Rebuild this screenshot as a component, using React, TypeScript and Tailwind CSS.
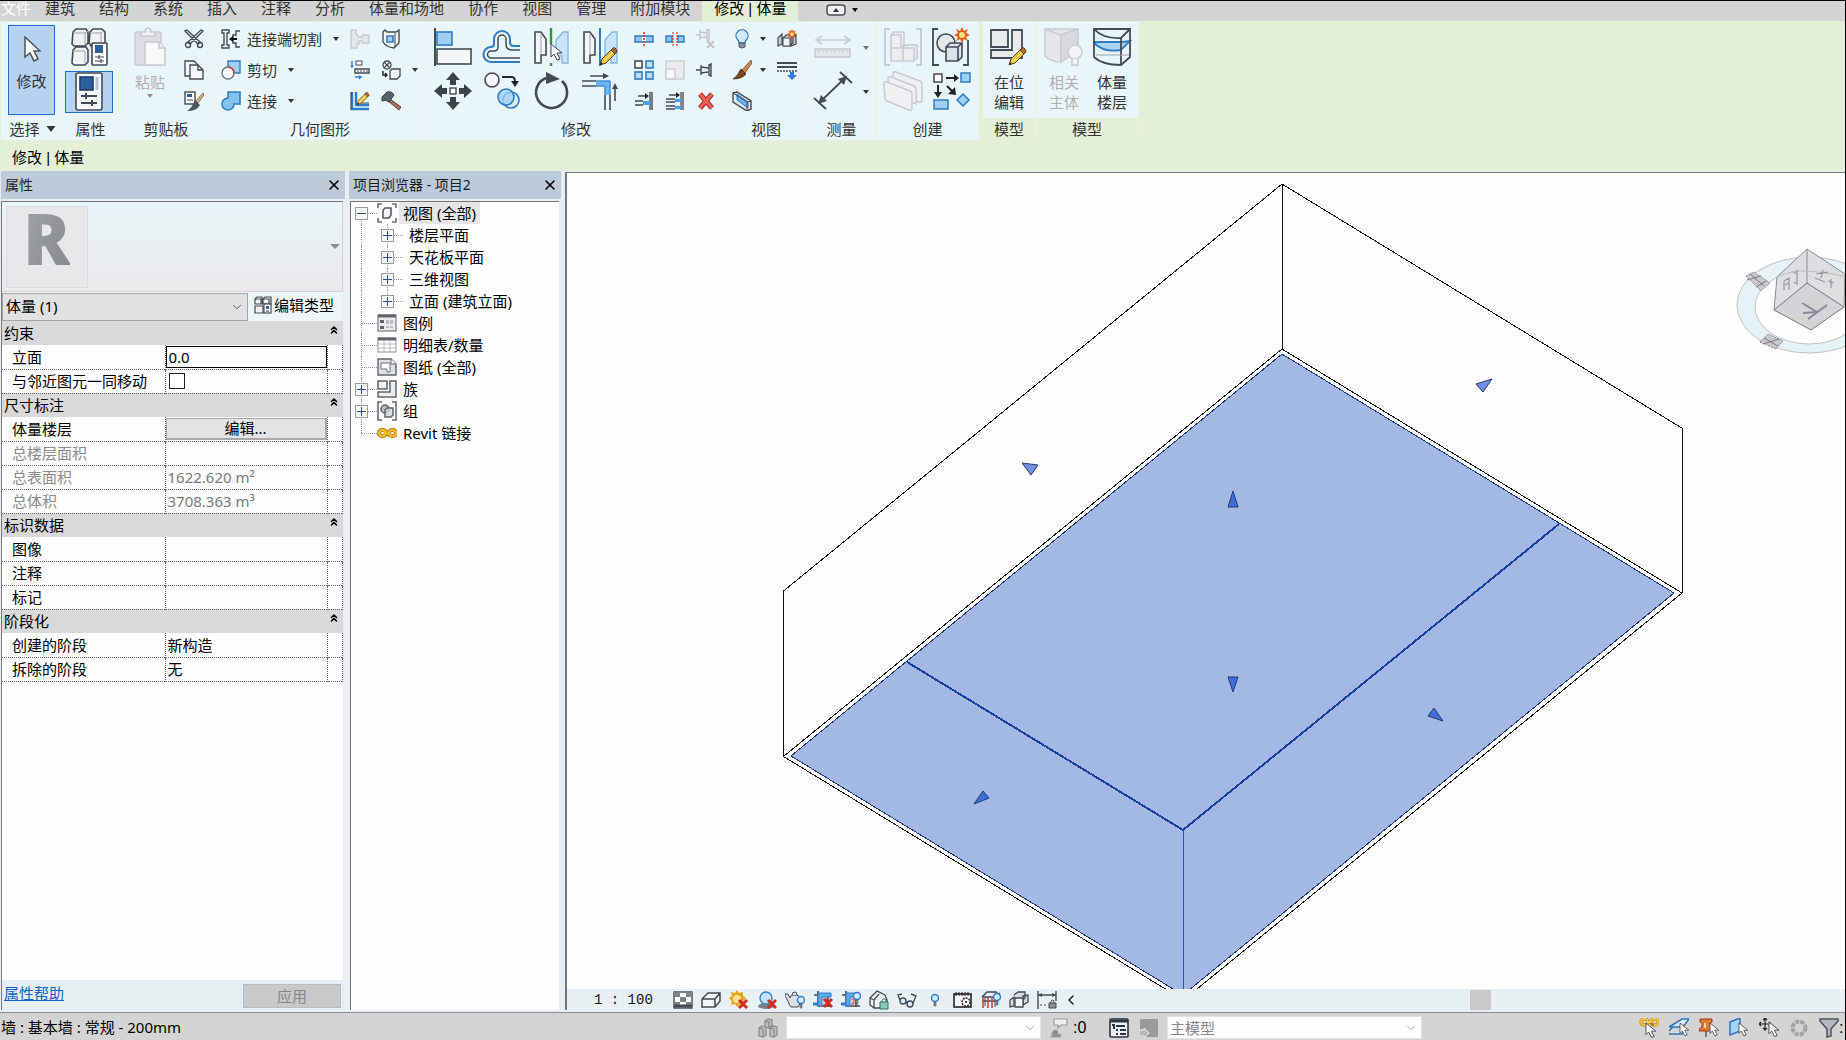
import { useState } from 'react';
import type { ReactNode } from 'react';
import clsx from 'clsx';
import { ChevronDown, ChevronLeft, ChevronsUp, X } from 'lucide-react';

const DARK = '#434a54';
const BLUE = '#2f7cc4';
const SKY = '#9fd0f3';
const PALE = '#c9ccd1';

// ---------- shared icon parts ----------

const Pointer = () => (
  <path d="M0 0v13l3-3 3 6 3-1-3-6h5z" fill="#fff" stroke="#3a404a" strokeWidth="1" />
);

const Pencil = () => (
  <>
    <path d="M0 18l2-6L13 1l4 4L6 16z" fill="#f5c43c" stroke="#5b4526" strokeWidth="1" />
    <path d="M11 3l2-2q2-1 3 1t1 3l-2 2z" fill="#b8652f" stroke="#5b4526" strokeWidth="1" />
    <path d="M4 14L13 5" stroke="#fff0b0" strokeWidth="1" />
    <path d="M0 18l1-3 2 2z" fill="#222" />
  </>
);

const Star = ({ x, y, r }: { x: number; y: number; r: number }) => (
  <g transform={`translate(${x} ${y}) scale(${r / 8})`}>
    <path d="M0-8l2 4 4-2-2 4 4 2-4 2 2 4-4-2-2 4-2-4-4 2 2-4-4-2 4-2-2-4 4 2z" fill="#e8591c" />
    <circle r="3" fill="#ffe27a" />
  </g>
);

const RedCross = ({ x, y }: { x: number; y: number }) => (
  <path transform={`translate(${x} ${y})`} d="M0 0l8 8M8 0L0 8" stroke="#cf2b1f" strokeWidth="3" />
);

const MiniBulb = ({ x, y }: { x: number; y: number }) => (
  <g transform={`translate(${x} ${y})`}>
    <circle cx="4" cy="4" r="3.5" fill="#d6ecff" stroke="#2f7fd0" strokeWidth="1.5" />
    <path d="M3 8h2v4H3z" fill="#8b8f94" stroke="#555" strokeWidth=".6" />
  </g>
);

const MirrorHalves = () => (
  <>
    <path d="M4 5h6l5 7v16h-5v8H4z" fill="#f4f5f6" stroke={DARK} strokeWidth="1.6" />
    <path d="M10 6v22" stroke="#9ba1a8" />
    <path d="M37 5h-5l-7 8v16h6v7h6z" fill="#c8e4f8" stroke="#85bbe0" strokeWidth="1.4" />
  </>
);

// large icons are drawn on a 40 grid, small ones on a 20 grid
const large: Record<string, ReactNode> = {
  typeProps: (
    <g strokeWidth="1.6" stroke={DARK} fill="#f1f2f3">
      <path d="M4 5l3-3h10l2 3v11l-3 3H5l-2-2zM21 5l3-3h9l3 3v11l-3 3H22l-2-3zM4 23l3-3h10l2 3v12l-3 3H5l-2-2z" />
      <path d="M4 6h12v12M16 6l3-2M21 6h11v10M32 6l3-2M4 24h12v12" fill="none" stroke="#9aa0a7" strokeWidth="1" />
      <rect x="23" y="16" width="15" height="22" rx="1" fill="#fff" />
      <rect x="26" y="18" width="8" height="8" fill="#2c5f9c" stroke="none" />
      <path d="M26 30h9M30 28v4M26 34h9M32 32v4" strokeWidth="1.2" />
    </g>
  ),
  props: (
    <g stroke={DARK} strokeWidth="1.6" fill="none">
      <rect x="7" y="1" width="26" height="37" rx="2" fill="#f6f7f8" />
      <rect x="11" y="5" width="13" height="13" fill="#2c5f9c" stroke="#1d3f6b" />
      <path d="M28 5v13" stroke="#b9c3cf" strokeWidth="3" />
      <path d="M12 24h16M17 21v6M12 31h16M23 28v6" strokeWidth="2" />
    </g>
  ),
  paste: (
    <g fill="#eef0f1" stroke={PALE} strokeWidth="1.6">
      <rect x="5" y="5" width="26" height="33" rx="2" fill="#dcdee1" />
      <path d="M11 9V5h4q0-4 3-4t3 4h4v4z" />
      <path d="M15 15h14l6 6v17H15z" fill="#f8f8f8" />
      <path d="M29 15v6h6" />
    </g>
  ),
  align: (
    <g strokeWidth="1.6">
      <path d="M2 1v38" stroke={DARK} strokeWidth="2" />
      <rect x="4" y="5" width="15" height="13" fill={SKY} stroke={BLUE} />
      <rect x="4" y="22" width="34" height="15" fill="#f4f6f7" stroke={DARK} />
    </g>
  ),
  offset: (
    <g fill="none" strokeWidth="2">
      <path d="M38 19h-6q-4 0-4-4v-3a8 8 0 0 0-16 0v5q0 3-3 3a7 7 0 0 0 0 15h29" stroke={BLUE} />
      <path d="M38 23h-8q-6 0-6-6v-5a4 4 0 0 0-8 0v8q0 4-4 4H9a3 3 0 0 0 0 7h29" stroke={DARK} strokeWidth="1.5" />
    </g>
  ),
  mirrorPick: (
    <>
      <MirrorHalves />
      <path d="M20 1v16M20 36v3" stroke="#2d9a35" strokeWidth="2.4" />
      <g transform="translate(20 17)"><Pointer /></g>
    </>
  ),
  mirrorDraw: (
    <>
      <MirrorHalves />
      <path d="M20 1v38" stroke={BLUE} strokeWidth="2" />
      <g transform="translate(20 20)"><Pencil /></g>
    </>
  ),
  move: (
    <g fill="#3b424c">
      <path d="M20 1l7 8h-4v5h-6V9h-4zM20 39l7-8h-4v-5h-6v5h-4zM1 20l8-7v4h5v6H9v4zM39 20l-8-7v4h-5v6h5v4z" />
      <rect x="17" y="17" width="6" height="6" fill="#fff" stroke={DARK} strokeWidth="1.4" />
    </g>
  ),
  copy: (
    <g strokeWidth="1.6">
      <circle cx="10" cy="9" r="7" fill="#f4f5f6" stroke={DARK} />
      <path d="M20 6h10q3 0 3 5" fill="none" stroke="#22262c" strokeWidth="2" />
      <path d="M29 10h8l-4 6z" fill="#22262c" />
      <circle cx="29" cy="29" r="8" fill="#d9eefb" stroke={BLUE} />
      <circle cx="24" cy="26" r="8" fill={SKY} fillOpacity=".8" stroke={BLUE} />
    </g>
  ),
  rotate: (
    <>
      <path d="M31 10a15.5 15.5 0 1 1-16-3" fill="none" stroke={DARK} strokeWidth="2.6" />
      <path d="M15 1l14 7-14 5z" fill={DARK} />
    </>
  ),
  trim: (
    <g fill="none" stroke={DARK} strokeWidth="1.6">
      <path d="M2 10h14M2 15h14M25 24v15M30 24v15" />
      <path d="M16 12.5h11.5V24" stroke="#6db5ef" strokeWidth="6" />
      <path d="M16 10h14v14M16 15h9v9" stroke={BLUE} strokeWidth="1" />
      <path d="M10 5h15M35 30V16" />
      <path d="M23 2l6 3-6 3zM32 18l3-6 3 6z" fill={DARK} stroke="none" />
    </g>
  ),
  ruler: (
    <g stroke={PALE} strokeWidth="1.6" fill="none">
      <path d="M3 13h34M9 9l-6 4 6 4M31 9l6 4-6 4" />
      <rect x="2" y="22" width="35" height="8" fill="#e3e5e7" />
      <path d="M6 22v4M10 22v3M14 22v4M18 22v3M22 22v4M26 22v3M30 22v4M34 22v3" strokeWidth="1" />
    </g>
  ),
  dimension: (
    <g stroke={DARK} strokeWidth="1.8" fill="none">
      <path d="M7 31L32 7M1 27l12 11M27 1l12 11" />
      <path d="M5 33l3-9 6 6zM34 5l-9 3 6 6z" fill={DARK} stroke="none" />
    </g>
  ),
  assembly: (
    <g stroke={PALE} strokeWidth="1.6" fill="#eceeef">
      <path d="M7 2H2v36h5M33 2h5v36h-5" fill="none" strokeWidth="2" />
      <path d="M8 8l3-3h10v13l-3 3H8zM8 21h12v13H8zM20 21l3-3h11v13l-3 3H20z" />
      <path d="M8 8h10v13M20 21h11v13" fill="none" />
    </g>
  ),
  group: (
    <>
      <path d="M7 2H2v36h6M32 38h5V13" fill="none" stroke={DARK} strokeWidth="1.8" />
      <circle cx="15" cy="16" r="9" fill="#e4e8ea" stroke={DARK} strokeWidth="1.6" />
      <path d="M15 20l4-4h12v14l-4 4H15zM15 20h12v14M27 20l4-4" fill="#d7e2ec" stroke={DARK} strokeWidth="1.6" />
      <Star x={31} y={8} r={8} />
    </>
  ),
  parts: (
    <g stroke={PALE} strokeWidth="1.6" fill="#eff0f1">
      <path d="M10 6V3q0-3 3-2l24 9q2 1 2 3v16q0 3-3 2L10 22z" />
      <path d="M5 10V7q0-2 3-1l23 9q2 1 2 3v15L5 24z" />
      <path d="M1 13q0-3 3-2l23 9q2 1 2 3v14q0 3-3 2L4 30q-2-1-2-3z" />
    </g>
  ),
  similar: (
    <g strokeWidth="1.5">
      <rect x="3" y="3" width="8" height="8" fill="#fff" stroke={DARK} />
      <rect x="30" y="2" width="9" height="9" fill={SKY} stroke={BLUE} />
      <rect x="3" y="29" width="14" height="9" fill={SKY} stroke={BLUE} />
      <path d="M32 23l6 6-6 6-6-6z" fill={SKY} stroke={BLUE} />
      <path d="M15 7h9M7 14v8M16 15l6 6" stroke="#222" fill="none" strokeWidth="2" />
      <path d="M23 3l5 4-5 4zM3 21h8l-4 6zM24 16l1 8-8-1z" fill="#222" />
    </g>
  ),
  editInPlace: (
    <>
      <path d="M2 3h17v17H2zM23 3h10v28H2v-8h21z" fill="#e8ebee" stroke={DARK} strokeWidth="1.8" />
      <g transform="translate(20 20)"><Pencil /></g>
    </>
  ),
  host: (
    <g stroke={PALE} strokeWidth="1.6" fill="#e4e6e8">
      <path d="M1 2h33l-17 6zM1 2v27q6 6 16 6V8z" />
      <path d="M34 2v22l-17 11V8z" fill="#d8dadd" />
      <circle cx="31" cy="25" r="7" fill="#f4f4f4" />
      <path d="M28 32v6h6v-6" fill="#f4f4f4" />
    </g>
  ),
  massFloor: (
    <g stroke={DARK} strokeWidth="1.8" fill="none">
      <path d="M2 15l28 0 8-1-9 9Q12 26 2 16z" fill="#a8d3f2" stroke={BLUE} />
      <path d="M2 2h36v28l-9 8Q10 38 2 30zM2 2q9 10 27 9l9-9M29 11v27" />
      <path d="M4 28h33" stroke="#9aa3ad" strokeWidth="1.2" />
    </g>
  ),
};

const small: Record<string, ReactNode> = {
  cut: (
    <g strokeWidth="1.4" stroke={DARK} fill="#eef0f2">
      <path d="M1 2l2-1 13 12-2 2zM19 2l-2-1L4 13l2 2z" />
      <circle cx="4" cy="16" r="2.5" fill="none" />
      <circle cx="16" cy="16" r="2.5" fill="none" />
    </g>
  ),
  copyClip: (
    <g stroke={DARK} strokeWidth="1.4" fill="#f7f8f9">
      <path d="M1 1h9l4 4v11H1z" />
      <path d="M6 5h8l5 5v9H6z" />
      <path d="M14 5v5h5" fill="none" />
    </g>
  ),
  matchType: (
    <>
      <rect x="1" y="1" width="10" height="12" fill="#fff" stroke={DARK} strokeWidth="1.4" />
      <path d="M3 3h5v3H3z" fill="#2c5f9c" />
      <path d="M3 9h6" stroke={DARK} />
      <path d="M19 2l-7 8 2 2 6-8z" fill="#e0b878" stroke="#6e512e" strokeWidth=".8" />
      <path d="M11 9l5 5q-3 6-13 6 5-3 8-11z" fill="#4b5560" />
    </>
  ),
  cope: (
    <g fill="none" stroke={DARK} strokeWidth="1.4">
      <path d="M1 1h7v3H6v12h2v3H1v-3h2V4H1zM19 2h-4v4h-3v8h3v4h4" />
      <path d="M9 10h7" stroke="#111" strokeWidth="2" />
      <path d="M8 10l4-3v6z" fill="#111" stroke="none" />
    </g>
  ),
  cutGeom: (
    <>
      <path d="M7 1h12v12h-5L7 6z" fill={SKY} stroke={BLUE} strokeWidth="1.4" />
      <circle cx="7" cy="13" r="6" fill="#fff" stroke="#6d747c" strokeWidth="1.4" />
      <path d="M7 7a6 6 0 0 1 6 6" fill="none" stroke="#e2372c" strokeWidth="1.6" />
    </>
  ),
  join: (
    <path d="M7 1h12v12h-6a6 6 0 1 1-6-6z" fill="#84c2ef" stroke={BLUE} strokeWidth="1.6" />
  ),
  wallJoin: (
    <path d="M1 1h5v4l3 3h3V6h7v8h-7v-2H9v3H7v4H1z" fill="#e4e6e8" stroke={PALE} strokeWidth="1.4" />
  ),
  beam: (
    <>
      <rect x="6" y="1" width="6" height="4" fill="#fff" stroke={DARK} />
      <path d="M5 9h14v4H5z" fill="#fff" stroke={DARK} strokeWidth="1.4" />
      <path d="M7 11h11" stroke={DARK} strokeDasharray="2 1" />
      <path d="M2 1v6M1 5l1 2 1-2M5 17h6M9 16l2 1-2 2" stroke="#2d7fe0" strokeWidth="1.4" fill="none" />
    </>
  ),
  layout: (
    <>
      <path d="M2 1v17h17M6 1v13h13" stroke={BLUE} strokeWidth="2.4" fill="none" />
      <path d="M1 1v18M8 12h11" stroke={DARK} />
      <g transform="translate(7 1) scale(.7)"><Pencil /></g>
    </>
  ),
  opening: (
    <>
      <path d="M2 3l2-2 2 2h9l3-2v13l-5 5q-8-1-11-6z" fill="#f5f6f7" stroke={DARK} strokeWidth="1.4" />
      <path d="M6 7h6v6H6z" fill="#a9d6f5" stroke={BLUE} strokeWidth="1.6" />
      <path d="M14 4v14" stroke={DARK} />
    </>
  ),
  splitFace: (
    <g fill="#f3f4f5" stroke={DARK} strokeWidth="1.3">
      <circle cx="6" cy="5" r="4" />
      <path d="M3 2l6 6M9 2L3 8" />
      <path d="M9 11l2-2h8v7l-3 3H9z" />
      <path d="M2 11v4h4M4 13l2 2-2 2" fill="none" stroke="#222" strokeWidth="1.4" />
    </g>
  ),
  demolish: (
    <>
      <path d="M9 8l11 8-2 3L7 10z" fill="#a86a5a" stroke="#5f463f" />
      <path d="M1 6l5-5q5-1 7 3L8 11q-3-3-7-1z" fill="#5a626b" stroke="#343a42" />
    </>
  ),
  split: (
    <>
      <path d="M1 7h18v6H1z" fill="#8cc6f0" stroke={BLUE} strokeWidth="1.4" />
      <path d="M8 10h4" stroke="#fff" strokeWidth="4" />
      <path d="M10 3v14" stroke="#d8352b" strokeWidth="1.6" strokeDasharray="2 1" />
    </>
  ),
  splitGap: (
    <>
      <path d="M1 7h6v6H1zM13 7h6v6h-6z" fill="#8cc6f0" stroke={BLUE} strokeWidth="1.4" />
      <path d="M8 3v14M12 3v14" stroke="#d8352b" strokeWidth="1.2" strokeDasharray="2 1" />
    </>
  ),
  unpin: (
    <g stroke="#c4c6ca" strokeWidth="1.4" fill="#eee">
      <path d="M0 6h4M4 1v10M4 3l7 1v4l-7 1M11 1l2-1v12l-2-1z" />
      <path d="M11 12l7 7M18 12l-7 7" strokeWidth="2.4" />
    </g>
  ),
  array: (
    <g strokeWidth="1.6" fill="#b9def7" stroke={BLUE}>
      <rect x="1" y="1" width="7" height="7" fill="#fff" stroke={DARK} />
      <rect x="12" y="1" width="7" height="7" />
      <rect x="1" y="12" width="7" height="7" />
      <rect x="12" y="12" width="7" height="7" />
    </g>
  ),
  scale: (
    <g strokeWidth="1.4" fill="#ececee" stroke={PALE}>
      <rect x="1" y="1" width="18" height="18" />
      <rect x="1" y="9" width="9" height="10" fill="#f8f8f8" />
    </g>
  ),
  pin: (
    <g stroke={DARK} strokeWidth="1.4" fill="#e8eaec">
      <path d="M0 10h5M5 5v10M5 7l8 1v4l-8 1M13 5l2-1v12l-2-1z" />
    </g>
  ),
  trimOne: (
    <g fill="none" stroke={DARK} strokeWidth="1.4">
      <path d="M1 10h8M1 14h8M4 5h8M18 1v18M16 1v18" />
      <path d="M9 12h7" stroke="#4aa0ea" strokeWidth="4" />
      <path d="M11 2l4 3-4 3z" fill="#222" stroke="none" />
    </g>
  ),
  trimMany: (
    <g fill="none" stroke={DARK} strokeWidth="1.3">
      <path d="M1 8h9M1 11h9M1 15h9M1 18h9M4 4h8M18 1v18M16 1v18" />
      <path d="M10 9.5h6M10 16.5h6" stroke="#4aa0ea" strokeWidth="3" />
      <path d="M11 1l4 3-4 3z" fill="#222" stroke="none" />
    </g>
  ),
  remove: (
    <>
      <path d="M4 3l12 14M16 3L4 17" stroke="#a82820" strokeWidth="5" />
      <path d="M4 3l12 14M16 3L4 17" stroke="#ee6156" strokeWidth="3" />
    </>
  ),
  bulb: (
    <>
      <path d="M7 14q0-2-2-4a6 6 0 1 1 10 0q-2 2-2 4z" fill="#cfe8fb" stroke="#3f7fb8" strokeWidth="1.3" />
      <path d="M7 14h6v4q-3 2-6 0z" fill="#8b9198" stroke="#555b62" />
    </>
  ),
  brush: (
    <>
      <path d="M19 0l-9 10 3 3 7-10z" fill="#c98a50" stroke="#76502f" strokeWidth=".8" />
      <path d="M9 9l5 5q-4 5-13 5 4-2 8-10z" fill="#7b4524" stroke="#46281a" strokeWidth=".8" />
    </>
  ),
  sectionBox: (
    <>
      <path d="M1 2l4-1 14 9v8l-4 2L1 11z" fill="#e4e7ea" stroke={DARK} strokeWidth="1.4" />
      <path d="M5 3l11 8v6L5 9z" fill="#69b4f0" stroke={BLUE} />
      <path d="M1 2l14 9v8M15 11l4-1" stroke={DARK} fill="none" />
    </>
  ),
  displace: (
    <>
      <path d="M1 9l4-4v10l-4 2zM14 9l5-3v9l-5 2zM6 9l3-3h7v8l-3 3H6z" fill="#c9ccd0" stroke={DARK} strokeWidth="1.2" />
      <path d="M6 9h7v8H6z" fill="#f0f1f2" stroke={DARK} />
      <Star x={15} y={5} r={5} />
    </>
  ),
  linework: (
    <>
      <path d="M0 3h20M0 7h20" stroke={DARK} strokeWidth="2" />
      <path d="M0 11h20" stroke={DARK} strokeDasharray="2 1" strokeWidth="1.4" />
      <path d="M13 12h4v3h3l-5 5-5-5h3z" fill="#2f7fe0" />
    </>
  ),
  // project browser
  views: (
    <g fill="none" stroke="#6b7178" strokeWidth="1.6">
      <path d="M5 1H1v4M15 1h4v4M5 19H1v-4M15 19h4v-4" />
      <path d="M6 7l2-2h6v7l-2 3H6z" fill="#f3f4f5" stroke="#555b63" />
    </g>
  ),
  legend: (
    <>
      <rect x="1" y="2" width="18" height="16" fill="#e9ebec" stroke="#5f656c" />
      <path d="M1 3h18" stroke="#5f656c" strokeWidth="3" />
      <path d="M3 7h4v3H3zM3 13h4v3H3z" fill="#5f656c" />
      <path d="M9 8h8M9 10h8M9 14h8" stroke="#8d9299" strokeDasharray="3 1" />
    </>
  ),
  schedule: (
    <>
      <rect x="1" y="3" width="18" height="14" fill="#fff" stroke="#8a8f95" />
      <path d="M1 4h18" stroke="#5f656c" strokeWidth="3" />
      <path d="M1 9h18M1 13h18M7 5v12M13 5v12" stroke="#b9bcc0" />
    </>
  ),
  sheet: (
    <>
      <path d="M1 2h13l5 5v11H1z" fill="#dfe2e5" stroke="#5f656c" strokeWidth="1.4" />
      <path d="M4 6h9v9h-3v-3H4z" fill="#fff" stroke="#6b7178" />
      <path d="M14 2v5h5" fill="#fff" stroke="#5f656c" />
    </>
  ),
  family: (
    <g fill="#eceeef" stroke="#5f656c" strokeWidth="1.5">
      <path d="M1 2h9v8H1zM13 2h6v16H1v-5h12z" />
    </g>
  ),
  groups: (
    <g fill="none" stroke="#5f656c" strokeWidth="1.5">
      <path d="M5 1H1v18h4M15 1h4v18h-4" />
      <circle cx="8" cy="8" r="4" fill="#b9bdc1" />
      <path d="M8 9l2-2h6v7l-2 2H8z" fill="#d3d6d9" fillOpacity=".8" />
    </g>
  ),
  link: (
    <g fill="none" stroke="#a87410" strokeWidth="4">
      <path d="M2 10a3 3 0 0 1 3-3h1a3 3 0 0 1 0 6H5a3 3 0 0 1-3-3M12 10a3 3 0 0 1 3-3h1a3 3 0 0 1 0 6h-1a3 3 0 0 1-3-3M7 10h6" />
      <path d="M2 10a3 3 0 0 1 3-3h1a3 3 0 0 1 0 6H5a3 3 0 0 1-3-3M12 10a3 3 0 0 1 3-3h1a3 3 0 0 1 0 6h-1a3 3 0 0 1-3-3M7 10h6" stroke="#f2b92c" strokeWidth="2.4" />
    </g>
  ),
  // view control bar
  detail: (
    <>
      <rect x="1" y="2" width="18" height="16" fill="#fff" stroke={DARK} strokeWidth="1.4" />
      <path d="M1 2h6v5H1zM13 2h6v5h-6zM7 7h6v5H7zM1 12h6v3H1zM13 12h6v3h-6z" fill="#7c838b" />
      <path d="M1 16h18" stroke={DARK} strokeWidth="3" />
    </>
  ),
  visualStyle: (
    <path d="M1 9l6-6h12v8l-5 6H1zM1 9h13v8M14 9l5-6" fill="#f4f5f6" stroke={DARK} strokeWidth="1.5" />
  ),
  sun: (
    <>
      <path d="M8 0l2 3 4-1v4l3 2-3 3 1 4-4-1-3 3-2-3-4 1 1-4-3-3 3-2-1-4 4 1z" fill="#e8a21c" />
      <circle cx="8" cy="9" r="4" fill="#ffe28a" />
      <RedCross x={10} y={10} />
    </>
  ),
  shadow: (
    <>
      <ellipse cx="9" cy="16" rx="8" ry="3" fill="#7a8087" />
      <circle cx="9" cy="8" r="6" fill="#c3e1f7" stroke="#3e86c8" strokeWidth="1.5" />
      <RedCross x={11} y={10} />
    </>
  ),
  render: (
    <>
      <path d="M0 4h3l2 4q0-3 4-3 6 0 7 4-1 6-3 8H6q-2-2-3-6L0 6z" fill="#dcdfe2" stroke={DARK} />
      <path d="M7 5q0-3 3-3 2 0 2 3" stroke={DARK} fill="#dcdfe2" />
      <MiniBulb x={12} y={6} />
    </>
  ),
  crop: (
    <>
      <path d="M5 1v15h14M1 5h14v12" fill="none" stroke={DARK} strokeWidth="1.6" />
      <path d="M5 3h13v4H9v9H5z" fill="#5ba9e8" stroke={BLUE} />
      <path d="M0 14h5" stroke={BLUE} strokeWidth="3" />
      <path d="M10 9h4v6h-4" fill="#f0c4c0" stroke="#b94a40" />
      <RedCross x={11} y={9} />
    </>
  ),
  cropRegion: (
    <>
      <path d="M5 1v15h14M1 5h14v12" fill="none" stroke={DARK} strokeWidth="1.6" />
      <path d="M5 3h11v4H9v9H5z" fill="#5ba9e8" stroke={BLUE} />
      <path d="M0 14h5" stroke={BLUE} strokeWidth="3" />
      <path d="M10 9h3v5h-3" fill="#f0c4c0" stroke="#b94a40" />
      <MiniBulb x={12} y={2} />
    </>
  ),
  locked: (
    <>
      <path d="M1 8l7-7 8 4 2 5v8H5l-4-3zM1 8l4 2 5-6M5 10v8" fill="#f0f1f2" stroke={DARK} strokeWidth="1.3" />
      <path d="M11 12h8v7h-8z" fill="#8ec9b4" stroke="#2f6f5f" />
      <path d="M13 12v-2q2-3 4 0v2" fill="none" stroke="#2f6f5f" />
    </>
  ),
  glasses: (
    <g fill="#d9ecfa" stroke={DARK} strokeWidth="1.4">
      <ellipse cx="6" cy="11" rx="3" ry="3" />
      <ellipse cx="13" cy="14" rx="3" ry="3" />
      <path d="M9 12l2 1M3 10L1 5l4-1M16 13l3-7-5-2" fill="none" />
    </g>
  ),
  reveal: <MiniBulb x={6} y={4} />,
  tempProps: (
    <>
      <rect x="1" y="4" width="17" height="13" fill="#f2f3f4" stroke="#222" strokeWidth="1.6" />
      <path d="M3 2v4M6 2v4M9 2v4M12 2v4M15 2v4" stroke="#222" />
      <circle cx="13" cy="12" r="4" fill="#fff" stroke="#222" strokeWidth="1.4" strokeDasharray="2 1" />
      <circle cx="13" cy="12" r="1" fill="#222" />
    </>
  ),
  analytical: (
    <>
      <path d="M1 7l5-5h9l4 4M1 7h13l5-4M1 11h15" fill="none" stroke={DARK} strokeWidth="1.5" />
      <path d="M2 8v10M7 8v10M11 8v10" stroke="#c8473b" strokeWidth="1.6" />
      <path d="M4 7v9M14 7v10" stroke={DARK} />
      <MiniBulb x={12} y={3} />
    </>
  ),
  displaced: (
    <>
      <path d="M5 5l4-3h7v6l-3 3M1 10l4-3v9l-4 1zM14 6l5-1v7l-5 3z" fill="#d9dbde" stroke={DARK} strokeWidth="1.3" />
      <path d="M6 8h8v9H6z" fill="#f4f4f5" stroke={DARK} strokeWidth="1.3" />
    </>
  ),
  constraints: (
    <>
      <path d="M1 1v18M19 1v10M1 5h18" stroke={DARK} strokeWidth="1.4" />
      <path d="M1 5l4-2v4zM19 5l-4-2v4z" fill={DARK} />
      <path d="M3 15h8" stroke={DARK} strokeDasharray="2 2" />
      <path d="M12 13h7v5h-7z" fill="#8b8f94" stroke="#444" />
      <path d="M14 13v-2q2-2 3 0v2" fill="none" stroke="#444" />
    </>
  ),
  // status bar
  worksets: (
    <g fill="#c0c0c0" stroke="#888" strokeWidth="1.2">
      <path d="M7 3l3-2 4 1v6l-3 2-4-1zM1 10l3-2 4 1v8l-3 2-4-1zM12 10l3-2 4 1v8l-3 2-4-1z" />
      <path d="M7 3l4 1v6M1 10l4 1v8M12 10l4 1v8" fill="none" />
    </g>
  ),
  requests: (
    <g fill="#f0f0f0" stroke="#9a9a9a" strokeWidth="1.2">
      <path d="M5 1h13v6h-6l-3 3V7H5z" />
      <path d="M3 18q0-6 4-6 3 2 1 4l4 1-1 2H2z" fill="#909090" />
    </g>
  ),
  options: (
    <g fill="none" stroke="#2b3442" strokeWidth="1.6">
      <rect x="1" y="1" width="18" height="18" rx="1" fill="#eef1f3" />
      <path d="M1 3h18" strokeWidth="3" />
      <path d="M3 7h3M7 8h9M7 12h2M11 12h6M7 16h2M11 16h6M5 8v3" strokeWidth="2" />
    </g>
  ),
  pickOption: (
    <>
      <path d="M1 1h18v18H1z" fill="#9b9b9b" />
      <path d="M0 12h5v-2l5 5-5 5v-2H0z" fill="#b8b8b8" stroke="#eee" />
    </>
  ),
  selLinks: (
    <>
      <g transform="translate(0 -5)">
        <path d="M2 9a3 3 0 0 1 3-3h1a3 3 0 0 1 0 6H5a3 3 0 0 1-3-3M12 9a3 3 0 0 1 3-3h1a3 3 0 0 1 0 6h-1a3 3 0 0 1-3-3M7 9h6" fill="none" stroke="#b27a0c" strokeWidth="3" />
        <path d="M2 9a3 3 0 0 1 3-3h1a3 3 0 0 1 0 6H5a3 3 0 0 1-3-3M12 9a3 3 0 0 1 3-3h1a3 3 0 0 1 0 6h-1M7 9h6" fill="none" stroke="#f7c63a" strokeWidth="1.8" />
      </g>
      <g transform="translate(7 5) scale(.9)"><Pointer /></g>
    </>
  ),
  selUnderlay: (
    <>
      <path d="M0 9h14l6-8h-7zM0 16h13l2-3M0 13L4 9" fill="#d6ebfa" stroke="#2f74b8" strokeWidth="1.5" />
      <g transform="translate(11 5) scale(.8)"><Pointer /></g>
    </>
  ),
  selPinned: (
    <>
      <path d="M1 1h12v3l-2 1v4l3 2v2H0v-2l3-2V5L1 4z" fill="#e07a2f" stroke="#9e3a18" />
      <path d="M5 5h2v5H5z" fill="#ffd39a" />
      <path d="M7 13v6" stroke="#555" strokeWidth="1.4" />
      <g transform="translate(11 5) scale(.8)"><Pointer /></g>
    </>
  ),
  selFace: (
    <>
      <path d="M1 4l10-4v13L1 17z" fill="#a7d4f4" stroke="#2f74b8" strokeWidth="1.5" />
      <g transform="translate(10 5) scale(.8)"><Pointer /></g>
    </>
  ),
  dragSel: (
    <>
      <path d="M6 0v12M0 6h12M4 2l2-2 2 2M4 10l2 2 2-2M2 4L0 6l2 2M10 4l2 2-2 2" fill="none" stroke="#222" strokeWidth="1.2" />
      <g transform="translate(10 4) scale(.9)"><Pointer /></g>
    </>
  ),
  background: (
    <circle cx="10" cy="10" r="6.5" fill="none" stroke="#a3a3a3" strokeWidth="4" strokeDasharray="4 1.2" />
  ),
  filter: (
    <path d="M1 1h18v2l-7 8v7l-4 1v-8L1 3z" fill="#b4b9bf" stroke="#4d535b" strokeWidth="1.5" />
  ),
  types: (
    <g fill="#f1f2f3" stroke={DARK} strokeWidth="1.2">
      <path d="M1 4l2-2h5v7H1zM9 4l2-2h6v7H9zM1 11h8v7H1z" />
      <path d="M1 4h6v5M9 4h6v5" fill="none" />
      <rect x="10" y="9" width="7" height="9" fill="#fff" />
      <path d="M12 11h3v3h-3z" fill="#2c5f9c" stroke="none" />
      <path d="M12 16h3" />
    </g>
  ),
};

const Big = ({ name }: { name: string }) => (
  <svg viewBox="0 0 40 40" className="size-10 shrink-0" aria-hidden="true">{large[name]}</svg>
);

const Small = ({ name }: { name: string }) => (
  <svg viewBox="0 0 20 20" className="size-5 shrink-0" aria-hidden="true">{small[name]}</svg>
);

const Caret = ({ className }: { className?: string }) => (
  <svg viewBox="0 0 6 4" className={clsx('h-1 w-1.5 shrink-0', className)} aria-hidden="true">
    <path d="M0 0h6L3 4z" fill="currentColor" />
  </svg>
);

const Tool = ({ name, big }: { name: string; big?: boolean }) => (
  <button type="button" aria-label={name} className="block">
    {big ? <Big name={name} /> : <Small name={name} />}
  </button>
);

// ---------- ribbon ----------

const tabs = ['文件', '建筑', '结构', '系统', '插入', '注释', '分析', '体量和场地', '协作', '视图', '管理', '附加模块'];

const RibbonTabs = () => (
  <nav className="flex h-5 shrink-0 bg-[#d4d4d4] font-['Liberation_Sans','Noto_Sans_CJK_SC',sans-serif] leading-4">
    {tabs.map((tab, i) => (
      <button key={tab} type="button" className={clsx('pb-1', i === 0 ? 'pl-px pr-0.5 text-white' : 'px-3')}>
        {tab}
      </button>
    ))}
    <button type="button" className="bg-[#e4efd8] px-3 pb-1 text-black">修改 | 体量</button>
    <button type="button" aria-label="最小化功能区" className="ml-7 flex items-center gap-1.5 pb-0.5 text-black">
      <svg viewBox="0 0 20 12" className="h-3 w-5">
        <rect x="1" y="1" width="18" height="10" rx="3" fill="#f4f4f4" stroke="#4a4f57" strokeWidth="1.5" />
        <path d="M7 8h6l-3-4z" fill="#333" />
      </svg>
      <Caret />
    </button>
  </nav>
);

type PanelProps = { title: ReactNode; width: string; body?: string; contextual?: boolean; children: ReactNode };

const Panel = ({ title, width, body, contextual, children }: PanelProps) => (
  <section className={clsx('flex shrink-0 flex-col border-r border-[#f3efdc] bg-[#e9f6f9]', width)}>
    <div className={clsx('flex h-24', body)}>{children}</div>
    <h2 className={clsx('flex h-[22px] items-center justify-center gap-2', contextual && 'bg-[#e4efd8]')}>{title}</h2>
  </section>
);

const SmallColumn = ({ names }: { names: string[] }) => (
  <div className="flex flex-col gap-[11px] pt-[7px]">
    {names.map((n) => <Tool key={n} name={n} />)}
  </div>
);

const BigColumn = ({ names }: { names: string[] }) => (
  <div className="flex flex-col gap-1 pt-[5px]">
    {names.map((n) => <Tool key={n} name={n} big />)}
  </div>
);

const geometry = [
  { icon: 'cope', label: '连接端切割' },
  { icon: 'cutGeom', label: '剪切' },
  { icon: 'join', label: '连接' },
];

const Ribbon = () => (
  <div className="flex h-[119px] shrink-0 bg-[#e4efd8] pl-px pt-px">
    <Panel title={<>选择 <Caret className="scale-150" /></>} width="w-[62px]" body="px-[7px] pt-[3px]">
      <button type="button" className="flex h-[90px] w-full flex-col items-center border border-[#1f6fc4] bg-[#b5d3ef] pt-2.5">
        <svg viewBox="0 0 18 26" className="h-[26px] w-[18px]">
          <path d="M2 1v20l5-4 4 8 4-2-4-8h6z" fill="#fff" stroke="#4b525c" strokeWidth="1.5" />
        </svg>
        <span className="mt-2">修改</span>
      </button>
    </Panel>
    <Panel title="属性" width="w-[56px]" body="flex-col items-center gap-1 pt-[5px] pr-1">
      <Tool name="typeProps" big />
      <button type="button" aria-label="props" className="flex h-[42px] w-12 items-center justify-center border border-[#1f6fc4] bg-[#b5d3ef]">
        <Big name="props" />
      </button>
    </Panel>
    <Panel title="剪贴板" width="w-[95px]" body="gap-3.5 pl-[11px]">
      <button type="button" disabled className="flex w-10 flex-col items-center pt-[5px] text-[#b3b0b3]">
        <Big name="paste" />
        <span className="mt-1">粘贴</span>
        <Caret className="text-[#8f8f92]" />
      </button>
      <SmallColumn names={['cut', 'copyClip', 'matchType']} />
    </Panel>
    <Panel title="几何图形" width="w-[213px]" body="pl-[7px]">
      <div className="flex w-[129px] flex-col gap-[11px] pt-[7px]">
        {geometry.map((g) => (
          <button key={g.icon} type="button" className="flex h-5 items-center">
            <Small name={g.icon} />
            <span className="ml-1.5 mr-[11px]">{g.label}</span>
            <Caret />
          </button>
        ))}
      </div>
      <div className="flex gap-[11px]">
        <SmallColumn names={['wallJoin', 'beam', 'layout']} />
        <SmallColumn names={['opening', 'splitFace', 'demolish']} />
      </div>
      <Caret className="ml-[11px] mt-[46px]" />
    </Panel>
    <Panel title="修改" width="w-[299px]" body="pl-1.5">
      <div className="mr-3.5 flex gap-[9px]">
        <BigColumn names={['align', 'move']} />
        <BigColumn names={['offset', 'copy']} />
        <BigColumn names={['mirrorPick', 'rotate']} />
        <BigColumn names={['mirrorDraw', 'trim']} />
      </div>
      <div className="flex gap-[11px]">
        <SmallColumn names={['split', 'array', 'trimOne']} />
        <SmallColumn names={['splitGap', 'scale', 'trimMany']} />
        <SmallColumn names={['unpin', 'pin', 'remove']} />
      </div>
    </Panel>
    <Panel title="视图" width="w-[81px]" body="pl-1.5">
      <SmallColumn names={['bulb', 'brush', 'sectionBox']} />
      <div className="flex w-[25px] flex-col items-center gap-[27px] pr-1 pt-[15px]">
        <Caret />
        <Caret />
      </div>
      <SmallColumn names={['displace', 'linework']} />
    </Panel>
    <Panel title="测量" width="w-[70px]" body="gap-2.5 pl-1.5">
      <BigColumn names={['ruler', 'dimension']} />
      <div className="flex flex-col gap-10 pt-6">
        <Caret className="text-[#6f7276]" />
        <Caret />
      </div>
    </Panel>
    <Panel title="创建" width="w-[102px]" body="gap-2 pl-1.5">
      <BigColumn names={['assembly', 'parts']} />
      <BigColumn names={['group', 'similar']} />
    </Panel>
    <div className="w-1" />
    <Panel title="模型" width="w-[53px]" body="justify-center" contextual>
      <button type="button" className="flex flex-col items-center pt-[5px] leading-5">
        <Big name="editInPlace" />
        <span className="mt-[5px] w-[30px]">在位编辑</span>
      </button>
    </Panel>
    <Panel title="模型" width="w-[103px]" body="gap-2 pl-2" contextual>
      <button type="button" disabled className="flex flex-col items-center pt-[5px] leading-5 text-[#b3b0b3]">
        <Big name="host" />
        <span className="mt-[5px] w-[30px]">相关主体</span>
      </button>
      <button type="button" className="flex flex-col items-center pt-[5px] leading-5">
        <Big name="massFloor" />
        <span className="mt-[5px] w-[30px]">体量楼层</span>
      </button>
    </Panel>
  </div>
);

// ---------- properties palette ----------

type Row = { label: string; kind?: 'input' | 'check' | 'button'; value?: string; muted?: boolean; boxed?: boolean };

const sections: { title: string; rows: Row[] }[] = [
  {
    title: '约束',
    rows: [
      { label: '立面', kind: 'input', value: '0.0', boxed: true },
      { label: '与邻近图元一同移动', kind: 'check' },
    ],
  },
  {
    title: '尺寸标注',
    rows: [
      { label: '体量楼层', kind: 'button', value: '编辑...' },
      { label: '总楼层面积', muted: true },
      { label: '总表面积', value: '1622.620 m²', muted: true },
      { label: '总体积', value: '3708.363 m³', muted: true },
    ],
  },
  {
    title: '标识数据',
    rows: [
      { label: '图像' },
      { label: '注释', kind: 'input', value: '' },
      { label: '标记', kind: 'input', value: '' },
    ],
  },
  {
    title: '阶段化',
    rows: [
      { label: '创建的阶段', value: '新构造' },
      { label: '拆除的阶段', value: '无' },
    ],
  },
];

const PaletteTitle = ({ children }: { children: ReactNode }) => (
  <div className="flex h-7 shrink-0 items-center justify-between bg-[#bccada] pl-1 pr-[3px] text-sm text-[#1c1c1c]">
    <h2>{children}</h2>
    <button type="button" aria-label="关闭" className="text-black"><X size={16} strokeWidth={2.4} /></button>
  </div>
);

const RowValue = ({ row }: { row: Row }) => {
  if (row.kind === 'input') {
    return (
      <input
        id={row.label}
        defaultValue={row.value}
        className={clsx('block h-[22px] w-full px-0.5 outline-none', row.boxed ? 'border border-black' : 'bg-transparent')}
      />
    );
  }
  if (row.kind === 'check') {
    return <input id={row.label} type="checkbox" className="ml-[3px] block size-4 appearance-none border border-[#222] bg-white" />;
  }
  if (row.kind === 'button') {
    return (
      <button id={row.label} type="button" className="block h-[22px] w-full border border-b-2 border-r-2 border-[#a9a9a9] bg-[#e3e3e3] leading-[18px]">
        {row.value}
      </button>
    );
  }
  return <span className="block pl-0.5">{row.value}</span>;
};

const Properties = () => (
  <aside className="mr-1 flex w-[344px] shrink-0 flex-col">
    <PaletteTitle>属性</PaletteTitle>
    <div className="mr-0.5 mt-0.5 flex min-h-0 flex-1 flex-col border-l border-t border-[#777] bg-[#fdfdfd] text-black">
      <div className="flex h-[90px] shrink-0 items-center justify-between border-b border-r border-[#d3d3d5] bg-linear-to-b from-[#e8f5f8] to-[#ebe9ec] pl-1 pr-0.5">
        <div className="h-[82px] w-[82px] border border-[#dcdcdf] bg-[#e6e8ea] pl-4 pt-px font-['Open_Sans',sans-serif] text-[70px] font-extrabold leading-[60px]">
          <span className="bg-linear-to-br from-[#a3a6a8] to-[#85888b] bg-clip-text text-transparent">R</span>
        </div>
        <svg viewBox="0 0 10 5" className="h-[5px] w-2.5"><path d="M0 0h10L5 5z" fill="#8e8e92" /></svg>
      </div>
      <div className="flex h-[29px] shrink-0 items-center bg-[#eef5f7]">
        <div className="relative h-7 w-[246px]">
          <select aria-label="类型过滤器" className="h-full w-full appearance-none border border-[#a6a6a6] bg-[#e2e2e2] px-[3px]">
            <option>体量 (1)</option>
          </select>
          <ChevronDown size={14} strokeWidth={1.5} className="pointer-events-none absolute right-1 top-[7px] text-[#444]" />
        </div>
        <button type="button" className="ml-1.5 flex items-center pb-[3px]">
          <Small name="types" />
          <span>编辑类型</span>
        </button>
      </div>
      <div className="flex-1">
        <table className="w-full table-fixed border-collapse">
          <colgroup>
            <col className="w-[163px]" />
            <col className="w-[162px]" />
            <col />
          </colgroup>
          {sections.map((s) => (
            <tbody key={s.title}>
              <tr className="h-6 bg-[#d9d9d9]">
                <th colSpan={3} className="p-0 font-normal">
                  <button type="button" className="flex w-full items-start justify-between pl-0.5 pr-[3px] leading-[22px]">
                    {s.title}
                    <ChevronsUp size={12} strokeWidth={3} className="mt-0.5" />
                  </button>
                </th>
              </tr>
              {s.rows.map((row) => (
                <tr key={row.label} className="h-6 border-b border-dotted border-[#666] leading-[22px]">
                  <th scope="row" className={clsx('border-r border-dotted border-[#666] p-0 pl-2.5 text-left font-normal', row.muted && 'text-[#8b8b8b]')}>
                    <label htmlFor={row.kind ? row.label : undefined}>{row.label}</label>
                  </th>
                  <td className={clsx('border-r border-dotted border-[#666] p-0', row.muted && 'text-[#7a7a7a]')}>
                    <RowValue row={row} />
                  </td>
                  <td className="border-r border-dotted border-[#666] p-0" />
                </tr>
              ))}
            </tbody>
          ))}
        </table>
      </div>
      <div className="flex h-[30px] shrink-0 items-center justify-between bg-[#e7eef1] pl-0.5 pr-0.5 pt-px">
        <a href="#help" className="pb-1 text-[#0b66c9] underline">属性帮助</a>
        <button type="button" disabled className="h-6 w-[98px] border border-[#bcbcbc] bg-[#c9c9c9] leading-5 text-[#86868a]">应用</button>
      </div>
    </div>
  </aside>
);

// ---------- project browser ----------

type Node = { label: string; icon?: string; depth: number; toggle?: 'plus' | 'minus' };

const nodes: Node[] = [
  { label: '视图 (全部)', icon: 'views', depth: 0, toggle: 'minus' },
  { label: '楼层平面', depth: 1, toggle: 'plus' },
  { label: '天花板平面', depth: 1, toggle: 'plus' },
  { label: '三维视图', depth: 1, toggle: 'plus' },
  { label: '立面 (建筑立面)', depth: 1, toggle: 'plus' },
  { label: '图例', icon: 'legend', depth: 0 },
  { label: '明细表/数量', icon: 'schedule', depth: 0 },
  { label: '图纸 (全部)', icon: 'sheet', depth: 0 },
  { label: '族', icon: 'family', depth: 0, toggle: 'plus' },
  { label: '组', icon: 'groups', depth: 0, toggle: 'plus' },
  { label: 'Revit 链接', icon: 'link', depth: 0 },
];

const Branch = ({ toggle, through, stub }: { toggle?: 'plus' | 'minus'; through: string; stub: boolean }) => (
  <span className="relative flex h-full w-[26px] shrink-0 items-center pl-1">
    <span className={clsx('absolute left-2.5 border-l border-dotted border-[#9a9a9a]', through)} />
    {stub && <span className="absolute left-2.5 right-0 top-[11px] border-t border-dotted border-[#9a9a9a]" />}
    {toggle && (
      <button type="button" aria-label={toggle} className="relative size-[13px] border border-[#9b9b9b] bg-[#f6f6f6]">
        <span className="absolute left-px right-px top-[5px] h-px bg-[#2b4f94]" />
        {toggle === 'plus' && <span className="absolute bottom-px left-[5px] top-px w-px bg-[#2b4f94]" />}
      </button>
    )}
  </span>
);

const Browser = () => {
  const [selected, setSelected] = useState(0);
  return (
    <aside className="mr-1 flex w-[212px] shrink-0 flex-col">
      <PaletteTitle>项目浏览器 - 项目2</PaletteTitle>
      <div className="ml-px mr-0.5 mt-0.5 flex-1 border-l border-t border-[#777] bg-[#fdfdfd] text-black">
        <ul>
          {nodes.map((n, i) => (
            <li key={n.label} className="flex h-[22px] items-center">
              <Branch
                toggle={n.depth === 0 ? n.toggle : undefined}
                stub={n.depth === 0}
                through={i === 0 ? 'top-1/2 bottom-0' : i === nodes.length - 1 ? 'top-0 bottom-1/2' : 'inset-y-0'}
              />
              {n.depth === 1 && (
                <Branch toggle="plus" stub through={nodes[i + 1].depth === 1 ? 'inset-y-0' : 'top-0 bottom-1/2'} />
              )}
              {n.icon && <Small name={n.icon} />}
              <button
                type="button"
                onClick={() => setSelected(i)}
                className={clsx('ml-0.5 h-[22px] px-1 leading-[22px]', i === selected && 'bg-[#e6e6e6]')}
              >
                {n.label}
              </button>
            </li>
          ))}
        </ul>
      </div>
    </aside>
  );
};

// ---------- 3D view ----------

const ViewCube = () => (
  <g>
    <path fillRule="evenodd" d="M1737 305a72 48 0 1 0 144 0 72 48 0 1 0-144 0zm18 2a54 37 0 1 1 108 0 54 37 0 1 1-108 0z" fill="#e6f3f6" stroke="#c4bfc0" />
    <path d="M1746 276l8-4 16 11-9 8zM1760 342l8-8 15 7-7 8z" fill="#c8c9cc" stroke="#8d8f94" strokeDasharray="2 1" />
    <path d="M1750 274l14 12M1747 280l14-4M1756 287l10-6M1764 338l14 8M1763 344l16-5" stroke="#777a80" />
    <path d="M1807 249l38 25-1 33-33 23-37-20 3-33z" fill="#dcdcde" fillOpacity=".92" />
    <path d="M1807 283l37 24-33 23-37-20z" fill="#d4d4d6" stroke="#77797d" />
    <path d="M1807 249l38 25-1 33M1807 249l-30 28-3 33M1807 249v34" fill="none" stroke="#8b8d91" />
    <path d="M1777 277q15-7 30-6t36 5" fill="none" stroke="#c3b9ba" />
    <path d="M1802 303l15 9M1803 313l14-1M1827 305l-19 14" fill="none" stroke="#858b99" strokeWidth="2" />
    <path d="M1784 281v9M1784 281l5-3v12M1785 285l3-2M1793 272l4 2M1797 270v14l-3-2M1816 274l12-2M1823 270l-2 8M1815 278l10 4M1828 281l6 2M1831 279v9" fill="none" stroke="#9498a0" strokeWidth="1.2" />
  </g>
);

const View3D = () => (
  <svg viewBox="567 173 1278 816" preserveAspectRatio="xMidYMin slice" className="min-h-0 w-full flex-1 bg-[#fdfdfd]">
    <g shapeRendering="crispEdges">
      <path d="M1282 354L791 756l392 239 491-402z" fill="#a4b8e6" stroke="#20366e" strokeWidth="1" />
      <g fill="none" stroke="#111" strokeWidth="1">
        <path d="M783.5 756V591L1282 184l400.5 244.5V593M1282.5 184v165" />
        <path d="M1282 349L783.5 756.5l400 243.5L1682 593z" />
      </g>
      <path d="M907 662l276 168 376-306" fill="none" stroke="#1b3f9c" strokeWidth="2" />
      <path d="M1183.5 830v160" stroke="#2150c4" />
    </g>
    <g fill="#3f6fd6" stroke="#27396b" strokeWidth="1">
      <path d="M1228 507h10l-5-16zM1228 677h10l-5 15zM983 791l6 7-15 6zM1443 721l-15-5 6-8z" />
      <path d="M1022 463l16 2-7 10zM1492 379l-16 5 7 8z" fill="#6f90e2" />
    </g>
    <ViewCube />
  </svg>
);

const viewControls = [
  'detail', 'visualStyle', 'sun', 'shadow', 'render', 'crop', 'cropRegion',
  'locked', 'glasses', 'reveal', 'tempProps', 'analytical', 'displaced', 'constraints',
];

const ViewBar = () => (
  <div className="flex h-[21px] shrink-0 items-center bg-[#e9f0f3] pl-[27px] text-[#111]">
    <button type="button" className="w-[79px] text-left font-['Liberation_Mono',monospace] text-sm">1 : 100</button>
    <div className="flex gap-2">
      {viewControls.map((n) => <Tool key={n} name={n} />)}
    </div>
    <button type="button" aria-label="向左滚动" className="ml-1.5"><ChevronLeft size={16} strokeWidth={2} /></button>
    <div className="flex flex-1 pl-[391px]">
      <div className="h-5 w-[21px] bg-[#c9c9c9]" />
    </div>
  </div>
);

// ---------- status bar ----------

const Combo = ({ label, value, width }: { label: string; value: string; width: string }) => (
  <div className={clsx('relative h-[23px]', width)}>
    <select aria-label={label} disabled className="h-full w-full appearance-none border border-[#e3e3e3] bg-[#fdfdfd] px-0.5 leading-5 text-[#85858f] opacity-100">
      <option>{value}</option>
    </select>
    <ChevronDown size={14} strokeWidth={1.2} className="pointer-events-none absolute right-1 top-[5px] text-[#888]" />
  </div>
);

const StatusBar = () => (
  <footer className="flex h-7 shrink-0 items-center border-t border-[#8c8c92] bg-[#d4d4d4] pl-px pt-0.5 text-black">
    <p className="w-[757px]">墙 : 基本墙 : 常规 - 200mm</p>
    <Small name="worksets" />
    <div className="ml-2 mr-2 flex"><Combo label="工作集" value="" width="w-[255px]" /></div>
    <Small name="requests" />
    <span className="ml-1 w-[36px] font-['Liberation_Sans',sans-serif] text-base">:0</span>
    <Tool name="options" />
    <span className="w-2.5" />
    <Tool name="pickOption" />
    <div className="ml-2 flex"><Combo label="设计选项" value="主模型" width="w-[255px]" /></div>
    <div className="ml-auto flex gap-2.5">
      {['selLinks', 'selUnderlay', 'selPinned', 'selFace', 'dragSel', 'background', 'filter'].map((n) => <Tool key={n} name={n} />)}
    </div>
    <span className="w-1.5 font-['Liberation_Sans',sans-serif] text-base">:</span>
  </footer>
);

export default function App() {
  return (
    <div className="flex h-screen flex-col overflow-hidden border-r border-t border-black bg-[#e9eef2] font-['Noto_Sans','Noto_Sans_CJK_SC',sans-serif] text-[15px] text-[#333]">
      <RibbonTabs />
      <Ribbon />
      <div className="flex h-[31px] shrink-0 items-center bg-[#e4efd8] pl-3 pt-1.5 font-['Liberation_Sans','Noto_Sans_CJK_SC',sans-serif] text-black">
        修改 | 体量
      </div>
      <main className="flex min-h-0 flex-1 pb-0.5 pl-px">
        <Properties />
        <Browser />
        <section className="mt-px flex min-w-0 flex-1 flex-col border-l-2 border-t border-[#777]">
          <View3D />
          <ViewBar />
        </section>
      </main>
      <StatusBar />
    </div>
  );
}
